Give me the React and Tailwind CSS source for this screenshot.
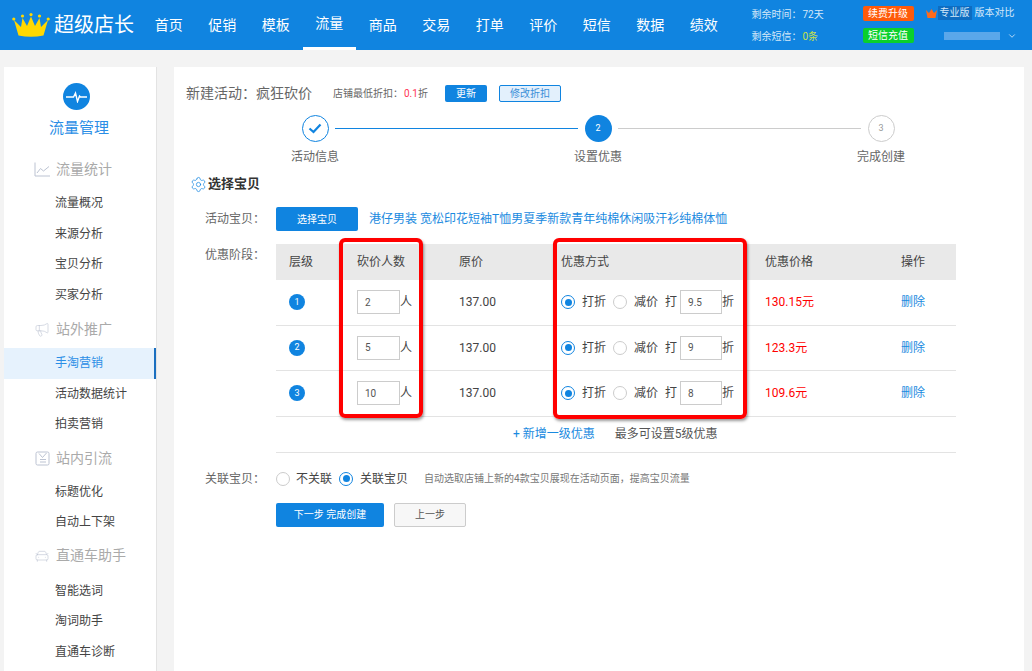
import React from "react";
import { Megaphone, CarFront, Settings, ChevronDown } from "lucide-react";

const navItems = ["首页", "促销", "模板", "流量", "商品", "交易", "打单", "评价", "短信", "数据", "绩效"];

const rows = [
	{ level: 1, people: "2", discount: "9.5", price: "130.15元" },
	{ level: 2, people: "5", discount: "9", price: "123.3元" },
	{ level: 3, people: "10", discount: "8", price: "109.6元" },
];

const Crown = () => (
	<svg width="38" height="24" viewBox="0 0 38 24" fill="#ffd800">
		<circle cx="1.8" cy="6" r="1.6" />
		<circle cx="10.5" cy="3" r="1.6" />
		<circle cx="19" cy="1.6" r="1.6" />
		<circle cx="27.5" cy="3" r="1.6" />
		<circle cx="36.2" cy="6" r="1.6" />
		<path d="M2 7 L9 14 L10.5 5 L15 13 L19 3.5 L23 13 L27.5 5 L29 14 L36 7 L31.5 22.5 Q19 25 6.5 22.5 Z" />
	</svg>
);

const SmallCrown = () => (
	<svg width="11" height="9" viewBox="0 0 11 9" fill="#ff6a1a">
		<path d="M0 1 L3 4 L5.5 0 L8 4 L11 1 L9.5 9 L1.5 9 Z" />
	</svg>
);

const Pulse = () => (
	<div className="w-[27px] h-[27px] mr-[8px] rounded-full bg-[#1084e0] flex items-center justify-center">
		<svg width="23" height="12" viewBox="0 0 23 12" fill="none" stroke="#fff" strokeWidth="1.4">
			<path d="M1 6 H8.5 L10.5 2 L12.5 10.5 L14.5 5 L15.5 6 H22" />
		</svg>
	</div>
);

const ChartIcon = () => (
	<svg width="16" height="15" viewBox="0 0 16 15" fill="none" stroke="#bcc3d2" strokeWidth="1">
		<path d="M1 0.5 V14 H16" />
		<path d="M3 11 L6.5 6.5 L9.5 9 L15 4.5" />
	</svg>
);

const TaskIcon = () => (
	<svg width="15" height="15" viewBox="0 0 15 15" fill="none" stroke="#bcc3d2" strokeWidth="1">
		<rect x="1" y="1" width="13" height="13" rx="1.5" />
		<path d="M4 2.5 L7.5 6.5 L11.5 2" />
		<path d="M5 8.5 H11 M5 11 H11" />
	</svg>
);

const Group = ({ icon, children, className }) => (
	<div className={`flex items-center pl-[30px] gap-[6px] text-[14px] text-[#aaaaaa] ${className || "h-[38px]"}`}>
		<span className="w-[16px] flex justify-center text-[#bcc3d2]">{icon}</span>
		{children}
	</div>
);

const Item = ({ children, active }) => (
	<div
		className={`h-[30.5px] flex items-center pl-[51px] text-[12px] ${
			active ? "bg-[#e6f2fd] text-[#2a8ee6] border-r-2 border-[#1a6fc0]" : "text-[#444444]"
		}`}
	>
		{children}
	</div>
);

const Sidebar = () => (
	<aside className="w-[153px] shrink-0 bg-white border-r border-[#e3e3e3]">
		<div className="h-[83px] pt-[16px] flex flex-col items-center">
			<Pulse />
			<div className="mt-[8px] mr-[2px] text-[15px] leading-[20px] text-[#2a8ee6]">流量管理</div>
		</div>
		<Group icon={<ChartIcon />}>流量统计</Group>
		<Item>流量概况</Item>
		<Item>来源分析</Item>
		<Item>宝贝分析</Item>
		<Item>买家分析</Item>
		<Group icon={<Megaphone size={19} strokeWidth={0.9} />}>站外推广</Group>
		<Item active>手淘营销</Item>
		<Item>活动数据统计</Item>
		<Item>拍卖营销</Item>
		<Group icon={<TaskIcon />} className="h-[37px]">站内引流</Group>
		<Item>标题优化</Item>
		<Item>自动上下架</Item>
		<Group icon={<CarFront size={20} strokeWidth={0.9} />} className="h-[38px] pb-[2px]">直通车助手</Group>
		<Item>智能选词</Item>
		<Item>淘词助手</Item>
		<Item>直通车诊断</Item>
	</aside>
);

const Header = () => (
	<header className="h-[50px] bg-[#1084e0] flex text-white">
		<div className="w-[142px] shrink-0 flex items-center pl-[12px] gap-[4px]">
			<Crown />
			<span className="text-[20px] leading-none">超级店长</span>
		</div>
		<nav className="flex">
			{navItems.map((n) => (
				<div
					key={n}
					className={`w-[53.5px] flex items-center justify-center text-[14px] ${
						n === "流量" ? "border-b-[3px] border-white" : ""
					}`}
				>
					{n}
				</div>
			))}
		</nav>
		<div className="ml-[21px] w-[111px] shrink-0 flex flex-col pt-[7px] gap-[7px] text-[10px] leading-[15px] text-[#d5e8f8]">
			<div className="flex">
				<span className="w-[51px] whitespace-nowrap">剩余时间：</span>
				<span>72天</span>
			</div>
			<div className="flex">
				<span className="w-[51px] whitespace-nowrap">剩余短信：</span>
				<span className="text-[#c8e04a]">0条</span>
			</div>
		</div>
		<div className="flex flex-col pt-[6px] gap-[7px] text-[10px] leading-[15px] text-center">
			<div className="w-[51px] h-[15px] rounded-[2px] bg-[#ff5a0a]">续费升级</div>
			<div className="w-[51px] h-[15px] rounded-[2px] bg-[#0ad02c]">短信充值</div>
		</div>
		<div className="ml-[12px] flex flex-col pt-[6px] gap-[10px] text-[10px] leading-[14px] text-[#d5e8f8]">
			<div className="flex items-center">
				<SmallCrown />
				<span className="ml-[1px] w-[34px] text-center bg-[#0e6cc0]">专业版</span>
				<span className="ml-[3px]">版本对比</span>
			</div>
			<div className="flex items-center ml-[18px] h-[12px]">
				<div className="w-[56px] h-[8px] bg-[#5aa7ea]" />
				<ChevronDown size={10} className="ml-[7px]" />
			</div>
		</div>
	</header>
);

const Step = ({ state, n, label }) => (
	<div className="w-[56px] flex flex-col items-center">
		{state === "done" && (
			<div className="w-[27px] h-[27px] rounded-full border border-[#1084e0] flex items-center justify-center">
				<svg width="14" height="11" viewBox="0 0 14 11" fill="none" stroke="#1084e0" strokeWidth="2.2">
					<path d="M1.5 5.5 L5.5 9 L12.5 1.5" />
				</svg>
			</div>
		)}
		{state === "current" && (
			<div className="w-[27px] h-[27px] rounded-full bg-[#1084e0] text-white text-[9px] flex items-center justify-center">{n}</div>
		)}
		{state === "todo" && (
			<div className="w-[27px] h-[27px] rounded-full border border-[#cccccc] text-[#999999] text-[9px] flex items-center justify-center">{n}</div>
		)}
		<div className="mt-[7px] text-[12px] leading-[16px] text-[#666666] whitespace-nowrap">{label}</div>
	</div>
);

const Radio = ({ on, className }) =>
	on ? (
		<span className={`w-[14px] h-[14px] rounded-full border border-[#1084e0] flex items-center justify-center shrink-0 ${className || ""}`}>
			<span className="w-[7px] h-[7px] rounded-full bg-[#1084e0]" />
		</span>
	) : (
		<span className={`w-[14px] h-[14px] rounded-full border border-[#cccccc] shrink-0 ${className || ""}`} />
	);

const NumBox = ({ value, className }) => (
	<div className={`h-[24px] border border-[#cccccc] pl-[7px] flex items-center text-[10px] text-[#555555] ${className}`}>{value}</div>
);

const tableCols = "grid grid-cols-[68px_102px_102px_204px_136px_68px]";

const PriceTable = () => (
	<div className="relative w-[680px] text-[12px] text-[#444444]">
		<div className={`${tableCols} h-[36px] items-center bg-[#e9e9e9] pl-[13px]`}>
			<div>层级</div>
			<div>砍价人数</div>
			<div>原价</div>
			<div>优惠方式</div>
			<div>优惠价格</div>
			<div>操作</div>
		</div>
		{rows.map((r) => (
			<div key={r.level} className={`${tableCols} h-[45.5px] items-center border-b border-[#e3e3e3] pl-[13px]`}>
				<div>
					<span className="w-[16px] h-[16px] rounded-full bg-[#1084e0] text-white text-[9px] flex items-center justify-center">{r.level}</span>
				</div>
				<div className="flex items-center">
					<NumBox value={r.people} className="w-[43px]" />
					<span>人</span>
				</div>
				<div>137.00</div>
				<div className="flex items-center">
					<Radio on />
					<span className="ml-[7px]">打折</span>
					<Radio className="ml-[7px]" />
					<span className="ml-[7px]">减价</span>
					<span className="ml-[7px] mr-[3px]">打</span>
					<NumBox value={r.discount} className="w-[42px]" />
					<span>折</span>
				</div>
				<div className="text-[#ff0000]">{r.price}</div>
				<div className="text-[#1a8ae0]">删除</div>
			</div>
		))}
		<div className="absolute left-[63px] top-[-6px] w-[84px] h-[180px] border-4 border-[#ff0000] rounded-[6px] shadow-[1px_2px_3px_rgba(0,0,0,0.4)]" />
		<div className="absolute left-[277px] top-[-6px] w-[194px] h-[181px] border-4 border-[#ff0000] rounded-[6px] shadow-[1px_2px_3px_rgba(0,0,0,0.4)]" />
	</div>
);

const Main = () => (
	<main className="w-[850px] shrink-0 ml-[17px] bg-white pt-[16px] h-full">
		<div className="flex items-center h-[20px] pl-[12px] text-[#666666]">
			<span className="text-[14px] w-[147px] whitespace-nowrap">新建活动：疯狂砍价</span>
			<span className="text-[10px]">店铺最低折扣：</span>
			<span className="text-[10px] ml-[1px]"><span className="text-[#ff3355]">0.1</span>折</span>
			<button className="ml-[17px] w-[42px] h-[17px] rounded-[2px] bg-[#1084e0] text-white text-[10px]">更新</button>
			<button className="ml-[12px] w-[62px] h-[17px] rounded-[2px] bg-[#e3f0fc] border border-[#1084e0] text-[#3a8fd8] text-[10px]">修改折扣</button>
		</div>
		<div className="flex mt-[12px] pl-[113px]">
			<Step state="done" label="活动信息" />
			<div className="-mx-2 w-[243px] h-px mt-[13px] bg-[#1084e0]" />
			<Step state="current" n="2" label="设置优惠" />
			<div className="-mx-2 w-[243px] h-px mt-[13px] bg-[#cccccc]" />
			<Step state="todo" n="3" label="完成创建" />
		</div>
		<div className="flex items-center mt-[9px] pl-[16px] gap-[1px] h-[20px]">
			<Settings size={17} strokeWidth={1} className="text-[#1084e0]" />
			<span className="text-[13px] font-bold text-[#333333]">选择宝贝</span>
		</div>
		<div className="flex items-center mt-[13px] h-[24px]">
			<span className="w-[102px] pl-[31px] text-[12px] text-[#666666]">活动宝贝：</span>
			<button className="w-[82px] h-[24px] rounded-[2px] bg-[#1084e0] text-white text-[10px]">选择宝贝</button>
			<span className="ml-[11px] text-[12px] text-[#1a8ae0] whitespace-nowrap">港仔男装 宽松印花短袖T恤男夏季新款青年纯棉休闲吸汗衫纯棉体恤</span>
		</div>
		<div className="flex mt-[13px]">
			<span className="w-[102px] pl-[31px] pt-[2px] text-[12px] text-[#666666]">优惠阶段：</span>
			<PriceTable />
		</div>
		<div className="ml-[102px] w-[680px] h-[36px] border-b border-[#e3e3e3] flex items-start pt-[9px] pl-[237px] text-[12px] leading-[16px]">
			<span className="text-[#1a8ae0]">+ 新增一级优惠</span>
			<span className="ml-[20px] text-[#555555]">最多可设置5级优惠</span>
		</div>
		<div className="flex items-center mt-[17px] h-[18px] text-[12px]">
			<span className="w-[102px] pl-[31px] text-[#666666]">关联宝贝：</span>
			<Radio />
			<span className="ml-[6px] text-[#444444]">不关联</span>
			<Radio on className="ml-[7px]" />
			<span className="ml-[7px] text-[#444444]">关联宝贝</span>
			<span className="ml-[16px] text-[10px] text-[#777777]">自动选取店铺上新的4款宝贝展现在活动页面，提高宝贝流量</span>
		</div>
		<div className="flex ml-[102px] mt-[15px] gap-[10px]">
			<button className="w-[108px] h-[24px] rounded-[2px] bg-[#1084e0] text-white text-[10px]">下一步 完成创建</button>
			<button className="w-[72px] h-[24px] rounded-[2px] bg-[#f7f7f7] border border-[#cccccc] text-[#555555] text-[10px]">上一步</button>
		</div>
	</main>
);

const App = () => {
	return (
		<div className="h-[671px] overflow-hidden bg-[#f3f3f3] font-['Roboto','Noto_Sans_CJK_SC',sans-serif]">
			<Header />
			<div className="flex h-[621px] pt-[17px] pl-[4px] overflow-hidden">
				<Sidebar />
				<Main />
			</div>
		</div>
	);
};

export default App;
